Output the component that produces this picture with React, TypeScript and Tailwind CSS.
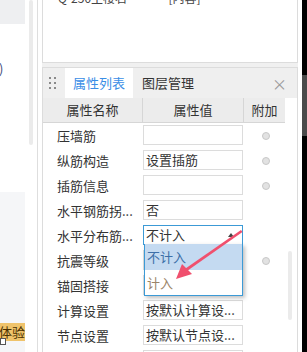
import React from 'react';

type Row = { name: string; value?: string; radio?: boolean; kind?: 'input' | 'select' };

const rows: Row[] = [
  { name: '压墙筋', value: '', radio: true },
  { name: '纵筋构造', value: '设置插筋', radio: true },
  { name: '插筋信息', value: '', radio: true },
  { name: '水平钢筋拐...', value: '否' },
  { name: '水平分布筋...', value: '不计入', kind: 'select' },
  { name: '抗震等级', value: '', radio: true },
  { name: '锚固搭接', value: '' },
  { name: '计算设置', value: '按默认计算设...' },
  { name: '节点设置', value: '按默认节点设...' },
  { name: '', value: '' },
];

function Radio() {
  return <div className="w-[8px] h-[8px] rounded-full bg-[#e2e2e2] border border-[#c8c8c8]" />;
}

export default function App() {
  return (
    <div
      className="w-[307px] h-[352px] flex bg-white overflow-hidden relative text-[#333]"
      style={{ fontFamily: '"Noto Sans CJK SC", "Noto Sans", sans-serif' }}
    >
      {/* Left strip */}
      <div className="w-[37px] h-full flex shrink-0">
        <div className="w-[25px] h-full flex flex-col">
          <div className="h-[24px] bg-[#eeeff1] shrink-0" />
          <div className="h-[36px] shrink-0" />
          <div className="text-[13px] leading-[18px] text-[#3b4a7a] -ml-[1px] shrink-0">)</div>
          <div className="h-[114px] shrink-0" />
          <div className="flex-1 bg-[#f5f6f8] flex flex-col">
            <div className="h-[131px] shrink-0" />
            <div className="h-[18px] bg-[#efc36b] text-[13px] leading-[18px] text-[#4a3000] whitespace-nowrap overflow-hidden flex justify-end shrink-0">
              体验
            </div>
            <div className="w-[6px] h-[7px] border border-[#555] mt-[-3px] bg-white" />
          </div>
        </div>
        <div className="w-[4px] ml-[4px] h-[145px] bg-[#ebebeb] rounded-sm" />
      </div>
      <div className="w-[1px] h-full bg-[#dedede] shrink-0" />
      <div className="w-[4px] h-full shrink-0" />

      {/* Main panel */}
      <div className="w-[256px] h-full flex flex-col shrink-0 bg-[#f0f0f0]">
        <div className="h-[63px] shrink-0 bg-white border-x border-b border-[#dcdcdc] overflow-hidden">
          <div className="text-[12px] leading-[12px] -mt-[8px] pl-[15px] text-[#444] whitespace-nowrap">
            Q-250主楼右 ··· [内容]
          </div>
        </div>
        <div className="h-[4px] shrink-0" />
        <div className="flex-1 min-h-0 overflow-hidden border-x border-t border-[#dcdcdc] flex flex-col bg-white">
          {/* header tabs */}
          <div className="h-[30px] bg-[#efefef] flex items-center shrink-0">
            <div className="grid grid-cols-2 gap-x-[3px] gap-y-[3px] ml-[6px] w-[7px]">
              {Array.from({ length: 6 }).map((_, i) => (
                <div key={i} className="w-[2px] h-[2px] bg-[#8a8a8a]" />
              ))}
            </div>
            <div className="ml-[9px] h-[30px] w-[68px] bg-white flex items-center justify-center text-[13px] text-[#3a8ee6]">
              属性列表
            </div>
            <div className="ml-[9px] text-[13px] text-[#333]">图层管理</div>
            <div className="ml-auto mr-[10px] text-[#9a9a9a] text-[15px] leading-none">×</div>
          </div>

          <div className="flex shrink-0">
            <div className="w-[242px] flex flex-col">
              {/* table header */}
              <div className="h-[25px] flex bg-[#ececec] border-b border-[#d6d6d6] text-[13px] shrink-0">
                <div className="w-[100px] flex items-center justify-center border-r border-[#d6d6d6]">属性名称</div>
                <div className="w-[101px] flex items-center justify-center border-r border-[#d6d6d6]">属性值</div>
                <div className="flex-1 flex items-center justify-center">附加</div>
              </div>
              {rows.map((r, i) => (
                <div key={i} className="h-[25px] flex shrink-0 text-[13px]">
                  <div className="w-[100px] flex items-center pl-[14px] whitespace-nowrap">{r.name}</div>
                  <div className="w-[101px] pt-[2px] pr-[1px]">
                    {r.kind === 'select' ? (
                      <div className="h-[20px] border border-[#3c9ad6] flex items-center pl-[2px] relative bg-white">
                        不计入
                        <div className="absolute right-[8px] top-[7px] w-0 h-0 border-l-[3px] border-r-[3px] border-b-[4px] border-l-transparent border-r-transparent border-b-[#444]" />
                      </div>
                    ) : (
                      <div className="h-[20px] border border-[#dcdcdc] flex items-center pl-[2px] whitespace-nowrap overflow-hidden">
                        {r.value}
                      </div>
                    )}
                  </div>
                  <div className="flex-1 flex items-center justify-center pl-[2px]">{r.radio && <Radio />}</div>
                </div>
              ))}
            </div>
            <div className="flex-1 relative">
              <div className="absolute left-[3px] top-[153px] w-[4px] h-[69px] bg-[#ebebeb] rounded-sm" />
            </div>
          </div>
        </div>
      </div>

      <div className="w-[4px] h-full bg-white shrink-0" />
      <div className="flex-1 h-full bg-black flex flex-col">
        <div className="h-[75px] shrink-0" />
        <div className="h-[61px] bg-[#4a4a4a] shrink-0" />
      </div>

      {/* dropdown list */}
      <div className="absolute left-[144px] top-[244px] w-[99px] h-[52px] border border-[#3c9ad6] border-t-0 bg-white shadow-[2px_2px_4px_rgba(0,0,0,0.25)] text-[13px] flex flex-col">
        <div className="h-[26px] bg-[#c4daf1] flex items-center pl-[2px] text-[#3d6fa8]">不计入</div>
        <div className="h-[25px] flex items-center pl-[2px] text-[#9a8468]">计入</div>
      </div>

      {/* annotation arrow */}
      <svg className="absolute left-0 top-0" width="307" height="352" viewBox="0 0 307 352">
        <polygon points="241,230 242.5,232 187,271 185.5,268.5" fill="#f0506e" />
        <polygon points="176,279 182,264 192,274" fill="#f0506e" />
      </svg>
    </div>
  );
}
